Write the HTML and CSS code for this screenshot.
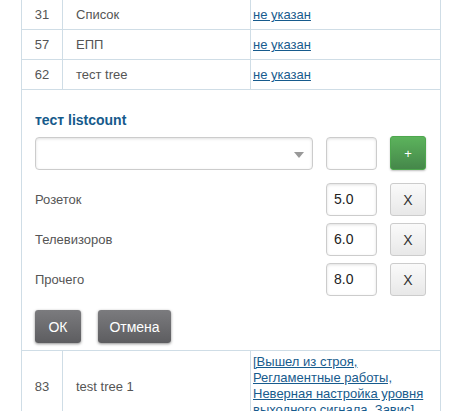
FILE: index.html
```html
<!DOCTYPE html>
<html lang="ru">
<head>
<meta charset="utf-8">
<link rel="stylesheet" href="styles.css">
</head>
<body>
<div class="wrap">
<table class="grid">
  <colgroup><col class="c1"><col class="c2"><col class="c3"></colgroup>
  <tr><td class="num">31</td><td class="name">Список</td><td class="val"><a href="#">не указан</a></td></tr>
  <tr><td class="num">57</td><td class="name">ЕПП</td><td class="val"><a href="#">не указан</a></td></tr>
  <tr><td class="num">62</td><td class="name">тест tree</td><td class="val"><a href="#">не указан</a></td></tr>
  <tr>
    <td colspan="3" class="editor">
      <div class="title">тест listcount</div>
      <div class="line">
        <div class="select"><span class="arrow"></span></div>
        <div class="input"></div>
        <button class="btn-add">+</button>
      </div>
      <div class="line item"><span class="label">Розеток</span><div class="input">5.0</div><button class="btn-x">X</button></div>
      <div class="line item"><span class="label">Телевизоров</span><div class="input">6.0</div><button class="btn-x">X</button></div>
      <div class="line item"><span class="label">Прочего</span><div class="input">8.0</div><button class="btn-x">X</button></div>
      <div class="actions"><button class="btn-dark ok">ОК</button><button class="btn-dark cancel">Отмена</button></div>
    </td>
  </tr>
  <tr class="tall"><td class="num">83</td><td class="name">test tree 1</td><td class="val"><a href="#">[Вышел из строя, Регламентные работы, Неверная настройка уровня выходного сигнала, Завис]</a></td></tr>
</table>
</div>
</body>
</html>
```

FILE: styles.css
```css
html, body {
  margin: 0;
  padding: 0;
  background: #fff;
  font-family: "Liberation Sans", Arial, sans-serif;
  font-size: 13px;
  color: #555;
}
.wrap {
  padding-left: 21px;
}
.grid {
  border-collapse: collapse;
  table-layout: fixed;
  width: 419px;
  margin-top: -1px;
}
.c1 { width: 41px; }
.c2 { width: 188px; }
.c3 { width: 190px; }
.grid td {
  border: 1px solid #cfdde6;
  padding: 7px 0;
  line-height: 15px;
  vertical-align: middle;
}
.grid td.num { text-align: center; }
.grid td.name { padding-left: 13px; }
.grid td.val { padding-left: 2px; padding-right: 2px; }
.grid .tall td.val { padding-top: 3px; padding-bottom: 3px; line-height: 16px; }
.val a {
  color: #175b8d;
  text-decoration: underline;
}
.grid td.editor {
  padding: 22px 14px 7px 13px;
}
.title {
  font-size: 14px;
  font-weight: bold;
  color: #165a8b;
  line-height: 16px;
  margin-bottom: 8px;
}
.line {
  display: grid;
  grid-template-columns: 1fr 51px 36px;
  column-gap: 13px;
  align-items: center;
  margin-bottom: 13px;
}
.line.item { margin-bottom: 7px; }
.select, .input {
  height: 33px;
  box-sizing: border-box;
  border: 1px solid #ccc;
  border-radius: 4px;
  background: #fff;
  box-shadow: inset 0 1px 3px rgba(0,0,0,0.12);
}
.select {
  position: relative;
}
.arrow {
  position: absolute;
  right: 8px;
  top: 14px;
  width: 0;
  height: 0;
  border-left: 5px solid transparent;
  border-right: 5px solid transparent;
  border-top: 6px solid #999;
}
.input {
  font-size: 14px;
  color: #222;
  line-height: 31px;
  padding-left: 7px;
}
.btn-add {
  height: 34px;
  width: 36px;
  border: 1px solid #4ea74e;
  border-radius: 3px;
  background: linear-gradient(#5cb35c, #45874a);
  color: #fff;
  font-family: inherit;
  font-size: 13px;
  padding: 0;
  box-shadow: 0 1px 2px rgba(0,0,0,0.25);
}
.label {
  font-size: 13px;
  color: #555;
}
.btn-x {
  height: 33px;
  width: 36px;
  border: 1px solid #ccc;
  border-radius: 3px;
  background: linear-gradient(#fafafa, #e8e8e8);
  color: #333;
  font-family: inherit;
  font-size: 14px;
  padding: 0;
}
.actions {
  display: flex;
  gap: 17px;
  margin-top: 14px;
}
.btn-dark {
  height: 33px;
  border: none;
  border-radius: 3px;
  background: linear-gradient(#7b7b7e, #5d5d60);
  color: #fff;
  font-family: inherit;
  font-size: 14px;
  padding: 0;
  box-shadow: 0 1px 3px rgba(0,0,0,0.45);
}
.ok { width: 46px; }
.cancel { width: 73px; }
```
